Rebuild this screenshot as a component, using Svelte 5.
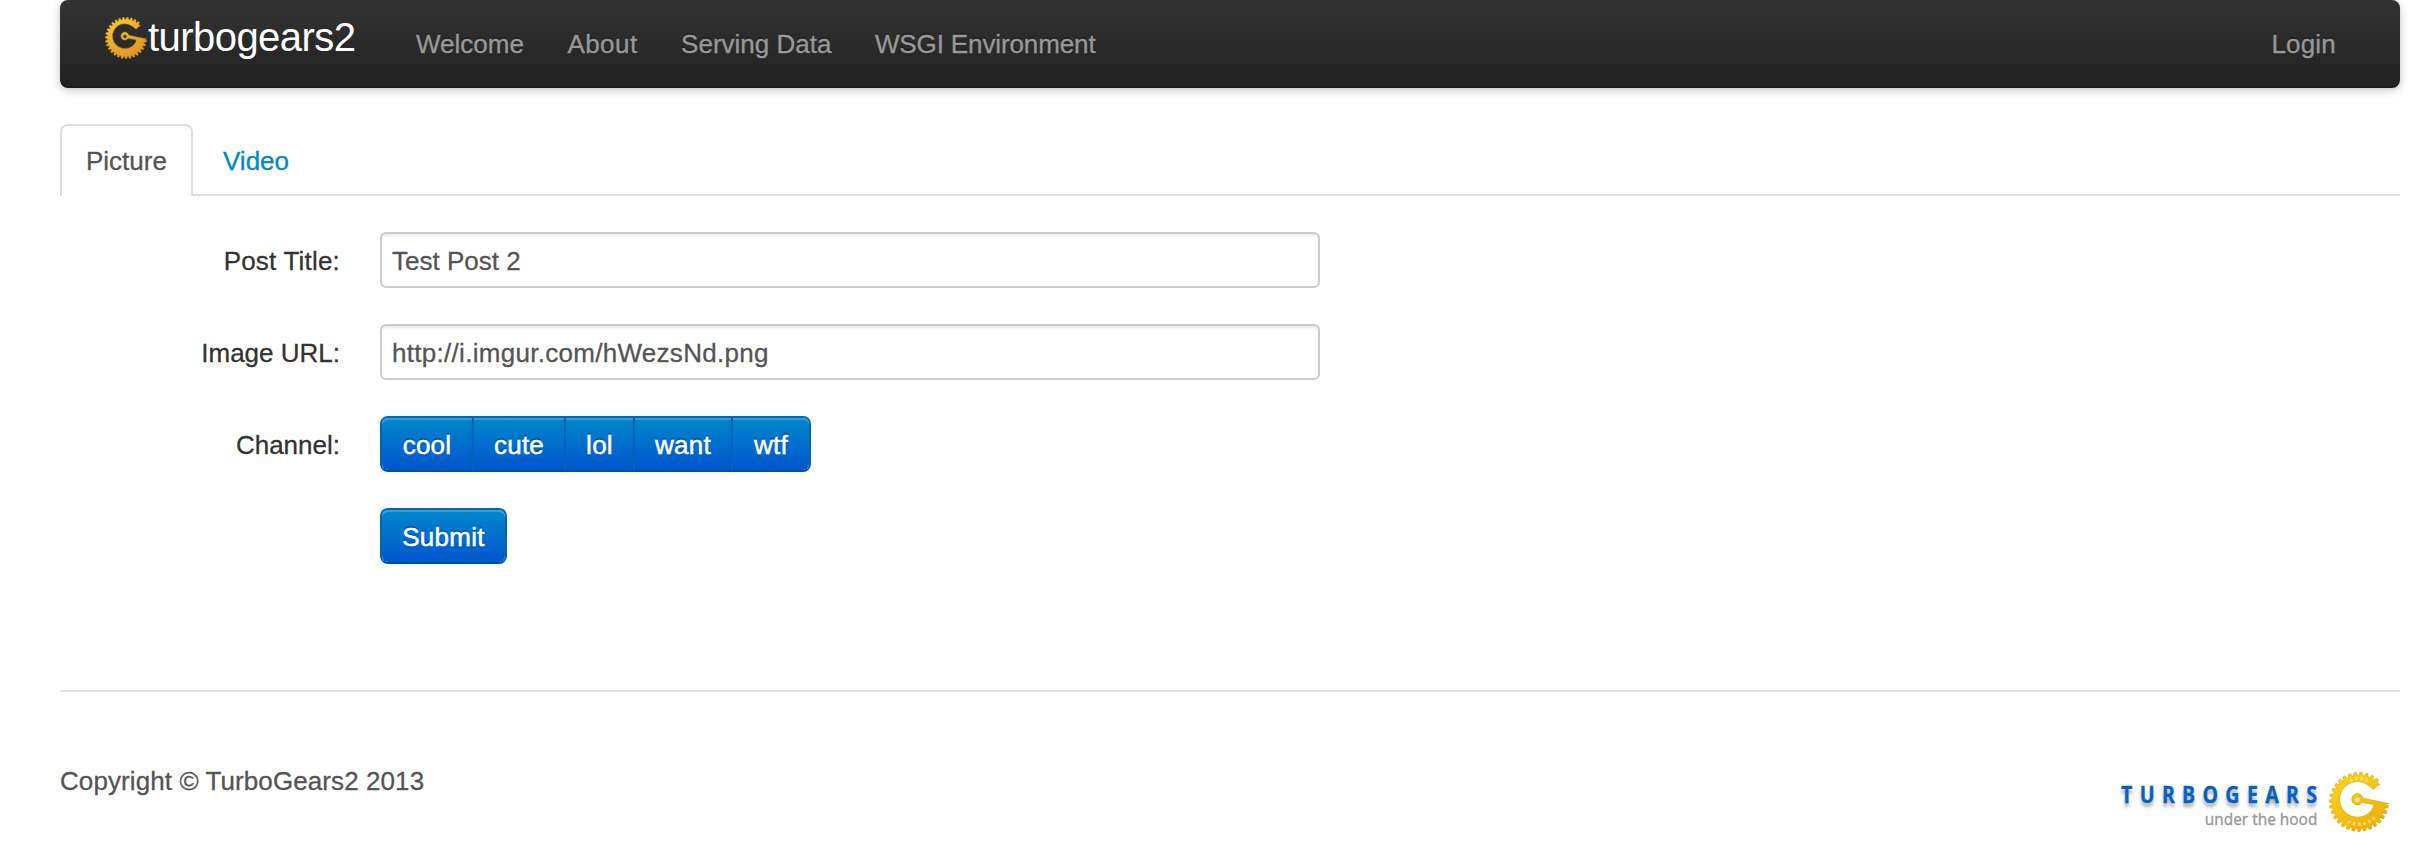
<script>
  const links = ['Welcome', 'About', 'Serving Data', 'WSGI Environment'];
  const channels = [
    { name: 'cool', width: 94 },
    { name: 'cute', width: 94 },
    { name: 'lol', width: 71 },
    { name: 'want', width: 100 },
    { name: 'wtf', width: 80 },
  ];
  let title = $state('Test Post 2');
  let url = $state('http://i.imgur.com/hWezsNd.png');

  // Toothed open ring, running anticlockwise from upper right round to the pointer.
  function gearPath() {
    const pts = [];
    const start = -47, end = -358, teeth = 27;
    const step = (end - start) / teeth;
    for (let i = 0; i < teeth; i++) {
      const a = start + i * step;
      for (const [f, r] of [[0, 26.4], [0.2, 29.6], [0.55, 29.6], [0.75, 26.4]]) {
        const t = ((a + f * step) * Math.PI) / 180;
        pts.push(`${(r * Math.cos(t)).toFixed(2)} ${(r * Math.sin(t)).toFixed(2)}`);
      }
    }
    return `M${pts.join('L')}L29.5 1.5L4 -3.8A5.7 5.7 0 1 0 3.2 .4L14.7 2.6L14.2 5.6A17.8 17.8 0 1 1 9.5 -16.6L14.7 -12.6L17.2 -15.6L20.5 -17.4Z`;
  }
  const gear = gearPath();
</script>

{#snippet gearIcon(cls, id, top, bottom, edge)}
  <svg class={cls} viewBox="-30 -30 60 60" aria-hidden="true">
    <defs>
      <linearGradient {id} x1="0" y1="0" x2="0.6" y2="1">
        <stop offset="0" stop-color={top} />
        <stop offset="1" stop-color={bottom} />
      </linearGradient>
    </defs>
    <path d={gear} fill="url(#{id})" stroke={edge} stroke-width=".7" stroke-linejoin="round" />
    <circle cx="-1.5" cy="-2.3" r="2.3" fill={cls === 'mark' ? '#2c2c2c' : '#fff4bd'} />
    {#if cls === 'wheel'}
      <path d="M-11 19.5A22 22 0 0 0 17 14M-9 -21.5A22.5 22.5 0 0 1 9 -21.5" fill="none" stroke="#fff0a0" stroke-opacity=".65" stroke-width="3" stroke-dasharray="2.6 2.6" />
    {/if}
  </svg>
{/snippet}

<div class="page">
  <nav class="navbar">
    <a class="brand" href="#home">{@render gearIcon('mark', 'g1', '#ffce2e', '#dd9429', '#c98f24')}<span>turbogears2</span></a>
    <ul class="links">
      {#each links as link}<li><a href="#nav">{link}</a></li>{/each}
    </ul>
    <a class="login" href="#login">Login</a>
  </nav>

  <ul class="tabs">
    <li class="active">Picture</li>
    <li>Video</li>
  </ul>

  <form onsubmit={(e) => e.preventDefault()}>
    <label class="wide" for="title">Post Title:</label>
    <input id="title" type="text" bind:value={title} />
    <label for="url">Image URL:</label>
    <input id="url" class="wide" type="text" bind:value={url} />
    <span class="label">Channel:</span>
    <div class="group">
      {#each channels as c}<button type="button" style="width: {c.width}px">{c.name}</button>{/each}
    </div>
    <button class="submit" type="submit">Submit</button>
  </form>

  <footer>
    <p>Copyright © TurboGears2 2013</p>
    <div class="powered">
      <div class="words">
        <strong>TURBOGEARS</strong>
        <small>under the hood</small>
      </div>
      {@render gearIcon('wheel', 'g2', '#ffd91c', '#efb00c', '#dba511')}
    </div>
  </footer>
</div>

<style>
  :global(body) { background: #fff; overflow: hidden; }
  .page {
    box-sizing: border-box;
    height: 864px;
    padding: 0 34px 0 60px;
    font: 26px/40px "Liberation Sans", Arial, sans-serif;
    -webkit-text-stroke: .3px;
    color: #333;
  }
  ul { list-style: none; margin: 0; padding: 0; }
  a { color: inherit; text-decoration: none; }
  .navbar {
    box-sizing: border-box;
    display: flex;
    height: 88px;
    padding: 0 64px 0 45px;
    border-radius: 8px;
    background: linear-gradient(#333, #222);
    box-shadow: 0 2px 8px rgba(0, 0, 0, .25), inset 0 -2px 0 rgba(0, 0, 0, .15);
    color: #999;
    text-shadow: 0 -2px 0 rgba(0, 0, 0, .25);
  }
  .brand {
    display: flex;
    width: 311px;
    color: #fff;
    font-size: 40px;
    line-height: 48px;
    letter-spacing: -.55px;
    text-shadow: none;
    -webkit-text-stroke: 0;
  }
  .brand span { padding-top: 13px; }
  .mark { width: 42px; height: 42px; margin: 17px 1px 0 0; }
  .links { display: flex; gap: 43.5px; padding-top: 24px; }
  .links li:nth-child(2) { letter-spacing: .45px; }
  .links li:last-child { letter-spacing: -.12px; }
  .login { margin-left: auto; padding-top: 24px; letter-spacing: .2px; }
  .tabs {
    display: flex;
    height: 70px;
    margin-top: 36px;
    border-bottom: 2px solid #ddd;
  }
  .tabs li {
    box-sizing: border-box;
    height: 72px;
    padding: 17px 24px 0 30px;
    color: #08c;
  }
  .tabs .active {
    width: 133px;
    padding: 15px 0 0 24px;
    border: 2px solid #ddd;
    border-bottom: 0;
    border-radius: 8px 8px 0 0;
    background: #fff;
    color: #555;
  }
  form {
    display: grid;
    grid-template-columns: 280px 940px;
    grid-auto-rows: 56px;
    column-gap: 40px;
    row-gap: 36px;
    margin-top: 36px;
  }
  label, .label { padding-top: 9px; text-align: right; }
  label.wide { letter-spacing: .2px; }
  input {
    box-sizing: border-box;
    width: 940px;
    height: 56px;
    padding: 2px 10px 0;
    border: 2px solid #ccc;
    border-radius: 6px;
    background: #fff;
    box-shadow: inset 0 2px 2px rgba(0, 0, 0, .075);
    color: #555;
    font: inherit;
    outline: 0;
  }
  input.wide { letter-spacing: .29px; }
  button {
    box-sizing: border-box;
    height: 56px;
    padding: 2px 0 0;
    border: 2px solid;
    border-color: #0069b3 #0069b3 #00509b;
    border-radius: 8px;
    background: linear-gradient(#08c, #05c) padding-box;
    box-shadow: inset 0 2px 0 rgba(255, 255, 255, .2), 0 2px 4px rgba(0, 0, 0, .05);
    color: #fff;
    font: inherit;
    letter-spacing: .25px;
    -webkit-text-stroke: .5px #fff;
    text-shadow: 0 -2px 0 rgba(0, 0, 0, .25);
  }
  .group { display: flex; }
  .group button { border-radius: 0; margin-left: -2px; border-left-color: #0062b8; }
  .group button:first-child { margin-left: 0; border-radius: 8px 0 0 8px; }
  .group button:last-child { border-radius: 0 8px 8px 0; }
  .submit { grid-column: 2; width: 127px; }
  footer {
    display: flex;
    justify-content: space-between;
    margin-top: 126px;
    padding-top: 69px;
    border-top: 2px solid #e5e5e5;
  }
  p { margin: 0; color: #555; letter-spacing: .09px; }
  .powered { display: flex; margin: 11px 11px 0 0; }
  .words { display: flex; flex-direction: column; align-items: flex-end; padding-top: 11px; }
  strong {
    font: 700 24px/22px "Noto Sans", sans-serif;
    letter-spacing: 8.9px;
    margin-right: -8.9px;
    transform: scaleX(.82);
    transform-origin: calc(100% - 8.9px) 50%;
    color: #0562c4;
    text-shadow: 0 4px 4px rgba(0, 0, 0, .35);
  }
  small {
    margin-top: 4px;
    font: 16px/20px "Noto Sans", sans-serif;
    transform: scaleX(.96);
    transform-origin: right;
    color: #999;
  }
  .wheel { width: 60px; height: 60px; margin-left: 12px; }
</style>
